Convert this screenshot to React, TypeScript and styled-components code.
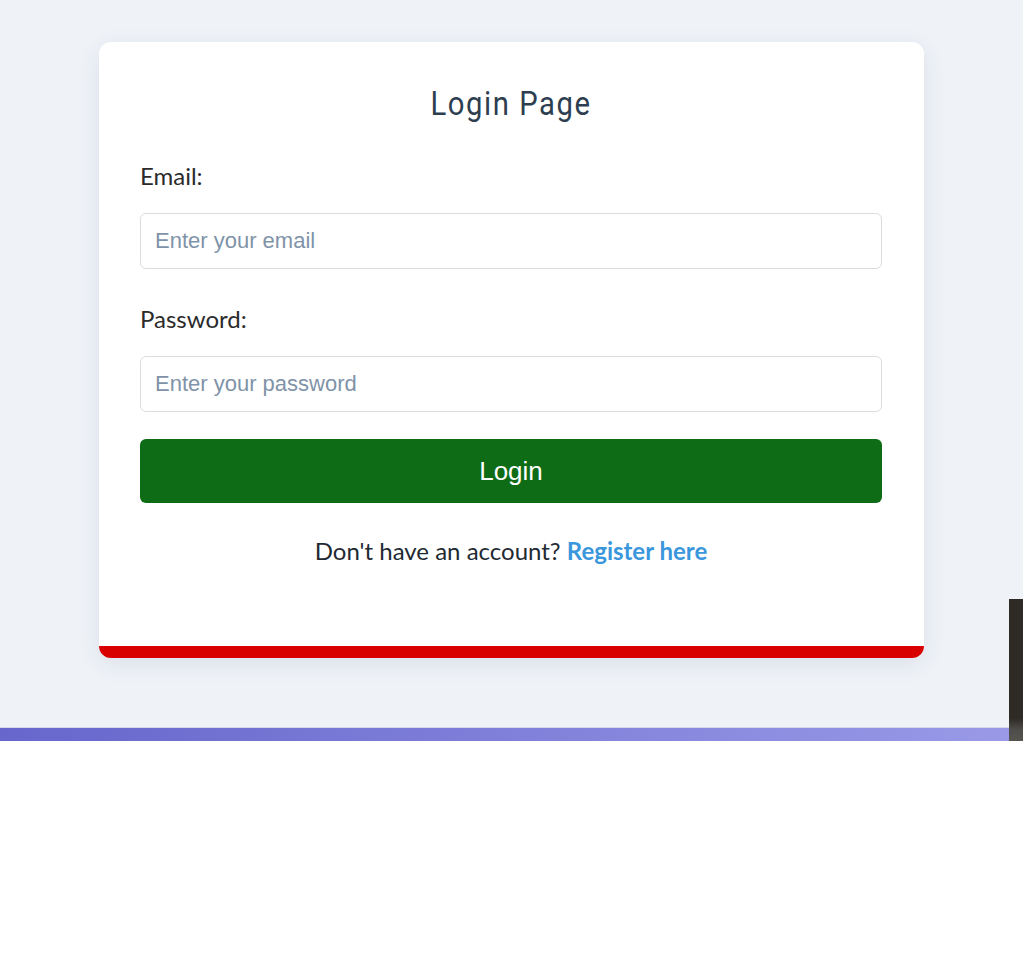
import React from 'react'
import styled, { createGlobalStyle } from 'styled-components'

const GlobalStyle = createGlobalStyle`
  body {
    margin: 0;
    background: #ffffff;
    font-family: Lato, "Open Sans", sans-serif;
  }
  * {
    box-sizing: border-box;
  }
`

const App = () => {
  return (
    <>
      <GlobalStyle />
      <Screen>
        <Page>
          <Card>
            <Title>Login Page</Title>
            <Form onSubmit={(e) => e.preventDefault()}>
              <Label htmlFor="email">Email:</Label>
              <Input id="email" type="email" placeholder="Enter your email" />
              <Label htmlFor="password" $spaced>
                Password:
              </Label>
              <Input id="password" type="password" placeholder="Enter your password" />
              <Button type="submit">Login</Button>
            </Form>
            <Footnote>
              Don't have an account? <Link href="#">Register here</Link>
            </Footnote>
          </Card>
        </Page>
        <GradientBar />
        <EdgeStrip />
      </Screen>
    </>
  )
}

export default App

const Screen = styled('div')`
  position: relative;
`

const Page = styled('div')`
  background: #eff3f8;
  padding: 42px 0 69px;
`

const Card = styled('div')`
  width: 825px;
  margin: 0 auto;
  background: #ffffff;
  border-radius: 12px;
  border-bottom: 12px solid #d90000;
  box-shadow: 0 6px 24px rgba(30, 40, 70, 0.09);
  padding: 40px 42px 81px 41px;
`

const Title = styled('h2')`
  margin: 0;
  font-family: Roboto, "Liberation Sans", sans-serif;
  font-weight: 400;
  font-size: 34px;
  line-height: 43px;
  letter-spacing: 1.8px;
  color: #2c3e50;
  text-align: center;
  transform: scaleX(0.86);
`

const Form = styled('form')`
  display: flex;
  flex-direction: column;
  margin-top: 36px;
`

const Label = styled('label')<{ $spaced?: boolean }>`
  font-size: 24px;
  line-height: 29px;
  color: #2b2b2b;
  margin-top: ${(p) => (p.$spaced ? '35px' : '0')};
  margin-bottom: 23px;
`

const Input = styled('input')`
  height: 56px;
  width: 100%;
  padding: 0 14px;
  border: 1px solid #dcdcdc;
  border-radius: 6px;
  font-family: "Liberation Sans", Arial, sans-serif;
  font-size: 22px;
  color: #333;
  outline: none;

  &::placeholder {
    color: #7f93a8;
  }
`

const Button = styled('button')`
  margin-top: 27px;
  height: 64px;
  width: 100%;
  border: none;
  border-radius: 6px;
  background: #0e6b16;
  color: #ffffff;
  font-family: "Liberation Sans", Arial, sans-serif;
  font-size: 26px;
  cursor: pointer;
`

const Footnote = styled('p')`
  margin: 33px 0 0;
  text-align: center;
  font-size: 24px;
  line-height: 29px;
  color: #1f2a33;
`

const Link = styled('a')`
  color: #3b97dc;
  font-weight: 700;
  text-decoration: none;
`

const EdgeStrip = styled('div')`
  position: absolute;
  right: 0;
  bottom: 0;
  width: 14px;
  height: 142px;
  background: linear-gradient(to bottom, #2e2a26 0, #2e2a26 84%, #4e4d4a 92%, #55544f 100%);
`

const GradientBar = styled('div')`
  height: 14px;
  border-top: 1px solid #d6dae6;
  background: linear-gradient(to right, #6666cc, #9a9ae8);
`
